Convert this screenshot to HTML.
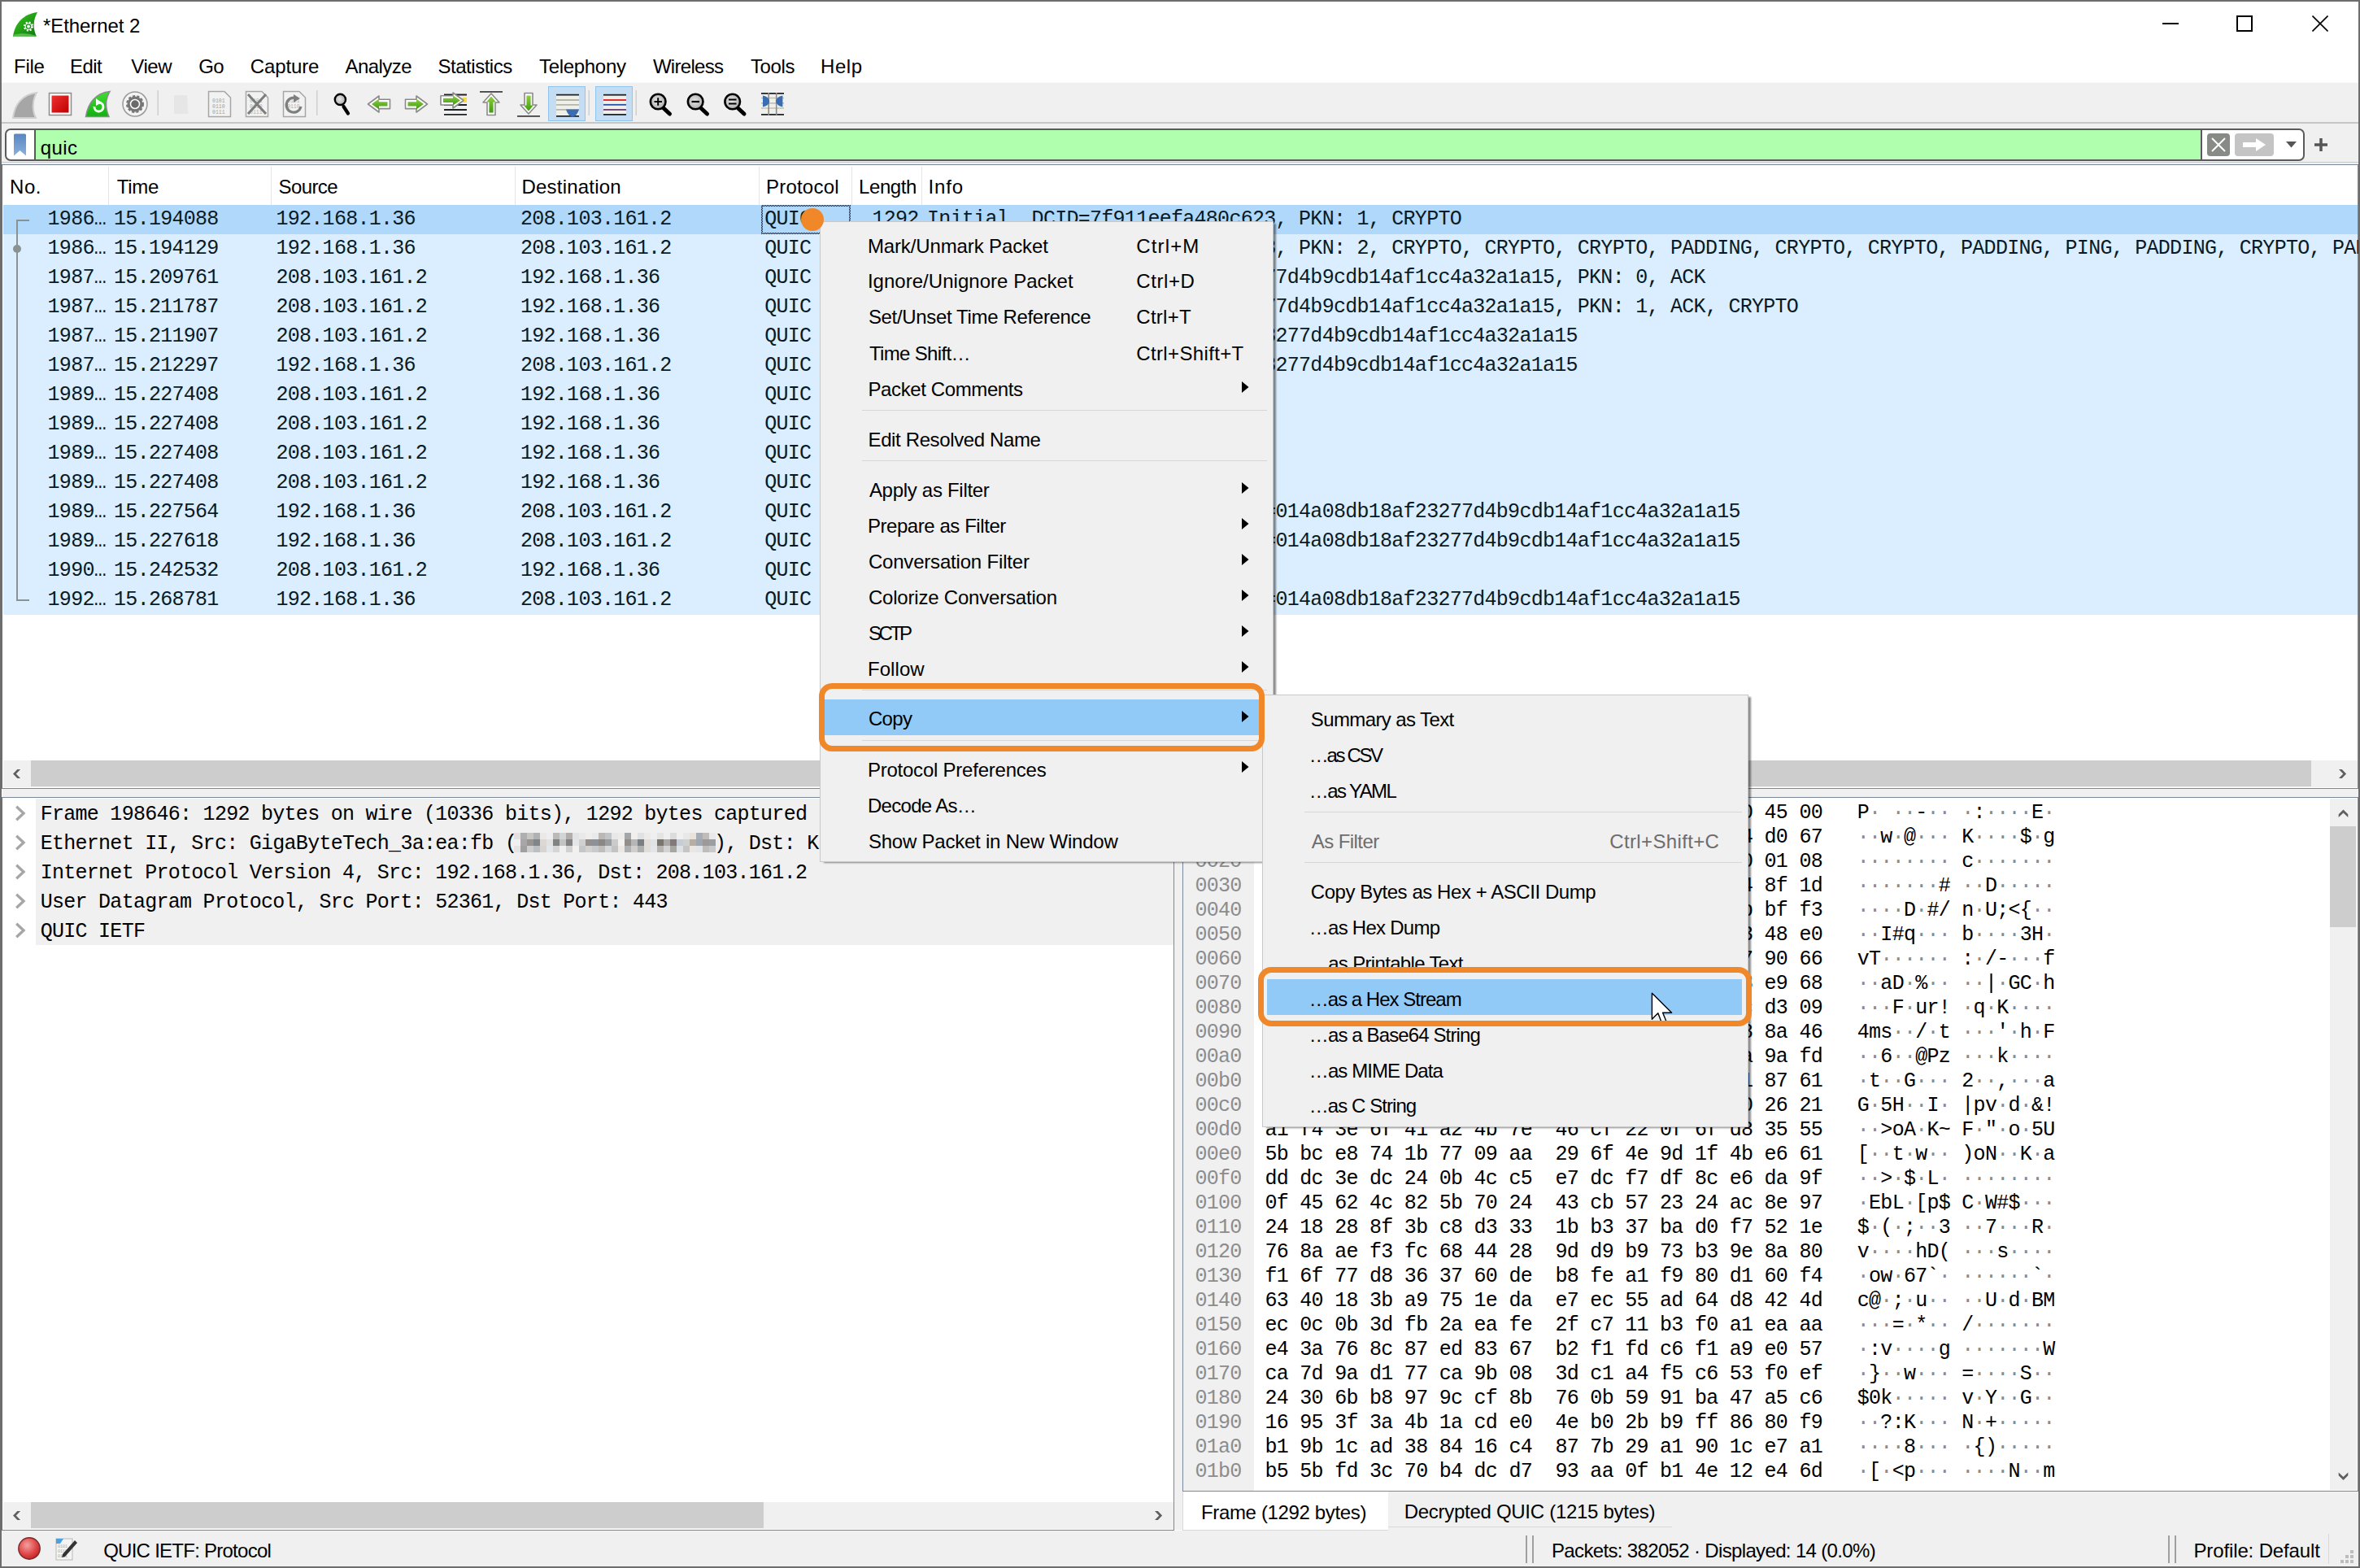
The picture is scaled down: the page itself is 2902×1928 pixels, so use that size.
<!DOCTYPE html><html><head><meta charset="utf-8"><style>
*{margin:0;padding:0;box-sizing:border-box}
html,body{width:2902px;height:1928px;overflow:hidden;background:#fff}
body{position:relative;font-family:"Liberation Sans",sans-serif;font-size:24px;color:#000}
.ab{position:absolute}
.t{position:absolute;white-space:pre;line-height:1}
.m{position:absolute;white-space:pre;font-family:"Liberation Mono",monospace;font-size:25px;letter-spacing:-0.722px;line-height:36px;color:#0a1a24}
.hx{position:absolute;white-space:pre;font-family:"Liberation Mono",monospace;font-size:25px;letter-spacing:-0.722px;line-height:30px;color:#000}
.dt{color:#8a8a8a}
.sb{position:absolute;background:#f0f0f0}
.th{position:absolute;background:#cdcdcd}
</style></head><body>
<div class="ab" style="left:0px;top:0px;width:2902px;height:1928px;border:2px solid #6d6d6d;"></div>
<svg class="ab" style="left:15px;top:14px" width="32" height="32" viewBox="0 0 32 32">
<defs><linearGradient id="fing" x1="0" y1="0" x2="1" y2="1"><stop offset="0" stop-color="#3cc820"/><stop offset="1" stop-color="#0a7a0a"/></linearGradient></defs>
<path d="M1 31 C3 15 14 3 31 1 C26 10 25 20 30 31 Z" fill="url(#fing)"/>
<path d="M2 29 C10 26 22 27 30 30 L30 31 L1 31 Z" fill="#7cc870" opacity="0.7"/>
<circle cx="20" cy="18.5" r="4.3" fill="#fff"/>
<circle cx="20" cy="18.5" r="5" fill="none" stroke="#fff" stroke-width="2.2" stroke-dasharray="2 1.93"/>
<circle cx="20" cy="18.5" r="2.6" fill="none" stroke="#1a8a1a" stroke-width="1.3"/>
</svg>
<div class="t" style="left:53.00px;top:20.08px;font-size:24px;letter-spacing:-0.080px;color:#000;">*Ethernet 2</div>
<div class="ab" style="left:2659px;top:28px;width:20px;height:2px;background:#000"></div>
<div class="ab" style="left:2750px;top:19px;width:20px;height:20px;border:2px solid #000"></div>
<svg class="ab" style="left:2843px;top:19px" width="20" height="20" viewBox="0 0 20 20"><path d="M0.5 0.5 L19.5 19.5 M19.5 0.5 L0.5 19.5" stroke="#000" stroke-width="1.6"/></svg>
<div class="t" style="left:17.10px;top:70.38px;font-size:24px;letter-spacing:-0.333px;color:#000;">File</div>
<div class="t" style="left:86.10px;top:70.38px;font-size:24px;letter-spacing:-0.600px;color:#000;">Edit</div>
<div class="t" style="left:161.30px;top:70.38px;font-size:24px;letter-spacing:-0.467px;color:#000;">View</div>
<div class="t" style="left:244.20px;top:70.38px;font-size:24px;letter-spacing:-0.700px;color:#000;">Go</div>
<div class="t" style="left:307.80px;top:70.38px;font-size:24px;letter-spacing:-0.133px;color:#000;">Capture</div>
<div class="t" style="left:424.60px;top:70.38px;font-size:24px;letter-spacing:-0.567px;color:#000;">Analyze</div>
<div class="t" style="left:538.50px;top:70.38px;font-size:24px;letter-spacing:-0.478px;color:#000;">Statistics</div>
<div class="t" style="left:663.00px;top:70.38px;font-size:24px;letter-spacing:-0.312px;color:#000;">Telephony</div>
<div class="t" style="left:802.90px;top:70.38px;font-size:24px;letter-spacing:-0.686px;color:#000;">Wireless</div>
<div class="t" style="left:922.90px;top:70.38px;font-size:24px;letter-spacing:-0.350px;color:#000;">Tools</div>
<div class="t" style="left:1009.00px;top:70.38px;font-size:24px;letter-spacing:0.567px;color:#000;">Help</div>
<div class="ab" style="left:2px;top:101px;width:2898px;height:51px;background:#f0f0f0;border-top:1px solid #fafafa"></div>
<div class="ab" style="left:2px;top:150px;width:2898px;height:2px;background:#c6c6c6"></div>

<svg class="ab" style="left:0;top:101px" width="1000" height="50" viewBox="0 101 1000 50">
 <defs>
  <linearGradient id="grn" x1="0" y1="0" x2="0" y2="1"><stop offset="0" stop-color="#8fd040"/><stop offset="1" stop-color="#3f9a10"/></linearGradient>
  <radialGradient id="lens" cx="0.45" cy="0.45" r="0.6"><stop offset="0" stop-color="#e8e8e8"/><stop offset="1" stop-color="#a8a8a8"/></radialGradient>
  <linearGradient id="redg" x1="0" y1="0" x2="1" y2="1"><stop offset="0" stop-color="#ee3030"/><stop offset="1" stop-color="#c00000"/></linearGradient>
  <linearGradient id="fin2" x1="0" y1="0" x2="0" y2="1"><stop offset="0" stop-color="#40e030"/><stop offset="1" stop-color="#10b010"/></linearGradient>
 </defs>
 <!-- shark fin gray -->
 <path d="M16 145 C18 128 28 116 45 114 C40 123 39 135 44 145 Z" fill="#a6a6a6" stroke="#d0d0d0" stroke-width="2"/>
 <!-- stop -->
 <rect x="60.5" y="114.5" width="27" height="27" fill="#fff" stroke="#8c8c8c" stroke-width="1.5"/>
 <rect x="63.5" y="117.5" width="21" height="21" fill="url(#redg)"/>
 <!-- restart fin -->
 <path d="M105.5 143.5 C108 127 118 114 135 112.5 C130 121 129 132 134 143.5 Z" fill="url(#fin2)" stroke="#8c8c8c" stroke-width="1.5"/>
 <path d="M116 131 A5.5 5.5 0 1 0 122 126" fill="none" stroke="#fff" stroke-width="3"/>
 <path d="M118 121 L125 126 L118 130 Z" fill="#fff"/>
 <!-- options gear -->
 <circle cx="166" cy="128" r="15" fill="#f4f4f4" stroke="#9a9a9a" stroke-width="1.5"/>
 <circle cx="166" cy="128" r="9.5" fill="#777" stroke="#777" stroke-width="3" stroke-dasharray="3 2.2"/>
 <circle cx="166" cy="128" r="5.5" fill="#6a6a6a" stroke="#fff" stroke-width="1.5"/>
 <rect x="193.5" y="111" width="1.5" height="31" fill="#cfcfcf"/>
 <!-- open (disabled) -->
 <path d="M214 117 L230 117 L231 136 L232 140 L214 140 Z" fill="#e4e4e4" opacity="0.8"/>
 <!-- save file -->
 <g fill="#f2f2f2" stroke="#a6a6a6" stroke-width="1.5"><path d="M256.5 112.5 L276 112.5 L283.5 120 L283.5 143.5 L256.5 143.5 Z"/></g>
 <g font-family="Liberation Mono" font-size="6.5" fill="#a0a0a0"><text x="261" y="126">0101</text><text x="261" y="133">0110</text><text x="261" y="140">0111</text></g>
 <!-- close file -->
 <g fill="#f2f2f2" stroke="#a6a6a6" stroke-width="1.5"><path d="M302.5 112.5 L322 112.5 L329.5 120 L329.5 143.5 L302.5 143.5 Z"/></g>
 <g font-family="Liberation Mono" font-size="6.5" fill="#b0b0b0"><text x="307" y="126">0101</text><text x="307" y="133">0110</text><text x="307" y="140">0111</text></g>
 <path d="M305 116 L327 140 M327 116 L305 140" stroke="#7c7c7c" stroke-width="3"/>
 <!-- reload -->
 <g fill="#f2f2f2" stroke="#a6a6a6" stroke-width="1.5"><path d="M348.5 112.5 L368 112.5 L375.5 120 L375.5 143.5 L348.5 143.5 Z"/></g>
 <g font-family="Liberation Mono" font-size="6.5" fill="#b0b0b0"><text x="353" y="126">0101</text><text x="353" y="133">0110</text></g>
 <path d="M370 131 A9 9 0 1 1 365 121" fill="none" stroke="#7e7e7e" stroke-width="3.2"/>
 <path d="M361 116 L369 121 L361 126 Z" fill="#7e7e7e"/>
 <rect x="389" y="111" width="1.5" height="31" fill="#cfcfcf"/>
 <!-- find -->
 <path d="M422.5 131 L428 139.5" stroke="#000" stroke-width="4.2" stroke-linecap="round"/>
 <circle cx="418.4" cy="122.4" r="6.6" fill="url(#lens)" stroke="#000" stroke-width="2.4"/>
 <!-- back / forward arrows -->
 <g stroke="#8a8a8a" stroke-width="1.6" stroke-linejoin="round" fill="#fff">
  <path d="M452.5 128 L466 118 L466 122.2 L479.5 122.2 L479.5 133.6 L466 133.6 L466 138 Z"/>
  <path d="M525.5 128 L512 118 L512 122.2 L498.5 122.2 L498.5 133.6 L512 133.6 L512 138 Z"/>
 </g>
 <path d="M457 128 L466 121.5 L466 125.3 L476.5 125.3 L476.5 130.6 L466 130.6 L466 134.5 Z" fill="url(#grn)"/>
 <path d="M521 128 L512 121.5 L512 125.3 L501.5 125.3 L501.5 130.6 L512 130.6 L512 134.5 Z" fill="url(#grn)"/>
 <!-- go to packet -->
 <g stroke="#1e2226" stroke-width="1.8"><path d="M546 116.5 H574 M546 129 H574 M546 135 H574 M546 140.8 H574"/></g>
 <rect x="568.5" y="120" width="5.5" height="6" fill="#f5dc40"/>
 <path d="M570 123.5 L557 114 L557 117.8 L542 117.8 L542 129 L557 129 L557 133 Z" fill="#fff" stroke="#8a8a8a" stroke-width="1.6" stroke-linejoin="round"/>
 <path d="M566 123.5 L557 117.3 L557 120.8 L545 120.8 L545 126 L557 126 L557 129.6 Z" fill="url(#grn)"/>
 <!-- first -->
 <path d="M590 112.9 H618" stroke="#444" stroke-width="1.8"/>
 <path d="M604 115 L614 126 L609 126 L609 141.5 L599 141.5 L599 126 L594 126 Z" fill="#fff" stroke="#8a8a8a" stroke-width="1.6" stroke-linejoin="round"/>
 <path d="M604 118.5 L610 125.5 L606.6 125.5 L606.6 138.5 L601.4 138.5 L601.4 125.5 L598 125.5 Z" fill="url(#grn)"/>
 <!-- last -->
 <path d="M636 142.9 H664" stroke="#444" stroke-width="1.8"/>
 <path d="M650 140 L660 129 L655 129 L655 114.5 L645 114.5 L645 129 L640 129 Z" fill="#fff" stroke="#8a8a8a" stroke-width="1.6" stroke-linejoin="round"/>
 <path d="M650 136.5 L656 129.5 L652.6 129.5 L652.6 117.5 L647.4 117.5 L647.4 129.5 L644 129.5 Z" fill="url(#grn)"/>
 <!-- autoscroll (pressed) -->
 <rect x="674.5" y="106.5" width="45" height="42" fill="#c4ddf3" stroke="#90c4f0" stroke-width="1"/>
 <rect x="684" y="116" width="28" height="27" fill="#f0f0ea"/>
 <g stroke="#b4b6a8" stroke-width="1.8"><path d="M684 123 H712 M684 128.8 H712 M684 134.9 H712"/></g>
 <path d="M684 116.7 H712 M684 142.8 H712" stroke="#1e2226" stroke-width="1.8"/>
 <path d="M696 134.5 H712 Q710 142 704 143.5 Q698 142 696 134.5 Z" fill="#3a6db3"/>
 <rect x="723.5" y="111" width="1.5" height="31" fill="#cfcfcf"/>
 <!-- colorize (pressed) -->
 <rect x="732.5" y="106.5" width="45" height="42" fill="#c4ddf3" stroke="#90c4f0" stroke-width="1"/>
 <rect x="742" y="116" width="28" height="26" fill="#f0f0ea"/>
 <path d="M742 116.7 H770" stroke="#1e2226" stroke-width="1.8"/>
 <path d="M742 123 H770" stroke="#e01818" stroke-width="1.8"/>
 <path d="M742 128.8 H770" stroke="#2850a8" stroke-width="1.8"/>
 <path d="M742 134.9 H770" stroke="#6a3a70" stroke-width="1.8"/>
 <path d="M742 140.9 H770" stroke="#1e2226" stroke-width="1.8"/>
 <rect x="781.5" y="111" width="1.5" height="31" fill="#cfcfcf"/>
 <!-- zoom in/out/normal -->
 <g>
  <path d="M816 133 L823.5 140" stroke="#000" stroke-width="5" stroke-linecap="round"/>
  <circle cx="809.2" cy="125" r="9.3" fill="url(#lens)" stroke="#000" stroke-width="2.6"/>
  <path d="M804.5 125 H814 M809.2 120.3 V129.7" stroke="#000" stroke-width="2"/>
  <path d="M862 133 L869.5 140" stroke="#000" stroke-width="5" stroke-linecap="round"/>
  <circle cx="855.2" cy="125" r="9.3" fill="url(#lens)" stroke="#000" stroke-width="2.6"/>
  <path d="M850.5 125 H860" stroke="#000" stroke-width="2.2"/>
  <path d="M907.5 133 L915 140" stroke="#000" stroke-width="5" stroke-linecap="round"/>
  <circle cx="900.7" cy="125" r="9.3" fill="url(#lens)" stroke="#000" stroke-width="2.6"/>
  <path d="M896 122.5 H905.5 M896 127.5 H905.5" stroke="#000" stroke-width="2"/>
 </g>
 <!-- resize columns -->
 <rect x="936" y="115" width="28" height="26" fill="#f0f0ea"/>
 <path d="M936 114.8 H964 M936 140.9 H964" stroke="#1e2226" stroke-width="1.8"/>
 <path d="M936 120.5 H964 M936 126.9 H964 M936 133 H964" stroke="#c0c2b6" stroke-width="1.6"/>
 <path d="M945.2 114 V142 M954.7 114 V142" stroke="#8c8c8c" stroke-width="1.6"/>
 <path d="M938 117.5 C943 118.5 946.2 121.5 946.2 124.5 C946.2 127.5 943 130.5 938 131.5 Z M962.4 117.5 C957.4 118.5 954.2 121.5 954.2 124.5 C954.2 127.5 957.4 130.5 962.4 131.5 Z" fill="#3a6db3"/>
</svg>
<div class="ab" style="left:2px;top:152px;width:2898px;height:50px;background:#f0f0f0"></div>
<div class="ab" style="left:6px;top:158px;width:2828px;height:40px;background:#fff;border:2px solid #5a5a5a;border-radius:7px"></div>
<div class="ab" style="left:42px;top:160px;width:2666px;height:36px;background:#afffaf;border-left:2px solid #5a5a5a;border-right:2px solid #5a5a5a"></div>
<svg class="ab" style="left:16px;top:164px" width="17" height="29" viewBox="0 0 17 29"><defs><linearGradient id="bmk" x1="0" y1="0" x2="0" y2="1"><stop offset="0" stop-color="#5a86c0"/><stop offset="1" stop-color="#8ab0de"/></linearGradient></defs><path d="M1 2 Q1 0.5 2.5 0.5 H14.5 Q16 0.5 16 2 V27.5 L8.5 21 L1 27.5 Z" fill="url(#bmk)"/></svg>
<div class="t" style="left:49.80px;top:169.58px;font-size:24px;letter-spacing:0.400px;color:#000;">quic</div>
<svg class="ab" style="left:2710px;top:160px" width="170" height="36" viewBox="0 0 170 36">
<rect x="4" y="4" width="28" height="28" rx="4" fill="#878a85"/>
<path d="M10 10 L26 26 M26 10 L10 26" stroke="#fff" stroke-width="2"/>
<rect x="38" y="4" width="48" height="28" rx="4" fill="#c4c4c4"/>
<path d="M48 15 H64 V10 L76 18 L64 26 V21 H48 Z" fill="#fff"/>
<path d="M101 14 H114 L107.5 21.5 Z" fill="#555"/>
<path d="M144 10 V26 M136 18 H152" stroke="#555" stroke-width="3.5"/>
</svg>
<div class="ab" style="left:2px;top:199px;width:2898px;height:1px;background:#c8c8c8"></div>
<div class="ab" style="left:2px;top:202px;width:2898px;height:768px;background:#fff;border:1px solid #7a8699;border-left-color:#6d6d6d"></div>
<div class="ab" style="left:133px;top:205px;width:1px;height:47px;background:#e5e5e5"></div>
<div class="ab" style="left:333px;top:205px;width:1px;height:47px;background:#e5e5e5"></div>
<div class="ab" style="left:633px;top:205px;width:1px;height:47px;background:#e5e5e5"></div>
<div class="ab" style="left:933px;top:205px;width:1px;height:47px;background:#e5e5e5"></div>
<div class="ab" style="left:1047px;top:205px;width:1px;height:47px;background:#e5e5e5"></div>
<div class="ab" style="left:1133px;top:205px;width:1px;height:47px;background:#e5e5e5"></div>
<div class="t" style="left:12.00px;top:218.08px;font-size:24px;letter-spacing:0.550px;color:#000;">No.</div>
<div class="t" style="left:143.70px;top:218.08px;font-size:24px;letter-spacing:-0.233px;color:#000;">Time</div>
<div class="t" style="left:342.50px;top:218.08px;font-size:24px;letter-spacing:-0.600px;color:#000;">Source</div>
<div class="t" style="left:641.50px;top:218.08px;font-size:24px;letter-spacing:0.200px;color:#000;">Destination</div>
<div class="t" style="left:942.00px;top:218.08px;font-size:24px;letter-spacing:0.214px;color:#000;">Protocol</div>
<div class="t" style="left:1141.60px;top:218.08px;font-size:24px;letter-spacing:0.833px;color:#000;">Info</div>
<div class="ab" style="left:1047px;top:205px;width:79px;height:45px;overflow:hidden">
<div class="t" style="left:9.00px;top:13.08px;font-size:24px;letter-spacing:-0.400px;color:#000;">Length</div>
</div>
<div class="ab" style="left:4px;top:252px;width:2895px;height:36px;background:#afd8fb"></div>
<div class="m" style="left:58.60px;top:252px">1986…</div>
<div class="m" style="left:140.1px;top:252px">15.194088</div>
<div class="m" style="left:339.5px;top:252px">192.168.1.36</div>
<div class="m" style="left:640px;top:252px">208.103.161.2</div>
<div class="m" style="left:940.2px;top:252px">QUIC</div>
<div class="m" style="left:1072.38px;top:252px">1292</div>
<div class="m" style="left:1140.1px;top:252px;width:1760px;overflow:hidden">Initial, DCID=7f911eefa480c623, PKN: 1, CRYPTO</div>
<div class="ab" style="left:4px;top:288px;width:2895px;height:36px;background:#daeeff"></div>
<div class="m" style="left:58.60px;top:288px">1986…</div>
<div class="m" style="left:140.1px;top:288px">15.194129</div>
<div class="m" style="left:339.5px;top:288px">192.168.1.36</div>
<div class="m" style="left:640px;top:288px">208.103.161.2</div>
<div class="m" style="left:940.2px;top:288px">QUIC</div>
<div class="m" style="left:1072.38px;top:288px">1292</div>
<div class="m" style="left:1140.1px;top:288px;width:1760px;overflow:hidden">Initial, DCID=7f911eefa480c623, PKN: 2, CRYPTO, CRYPTO, CRYPTO, PADDING, CRYPTO, CRYPTO, PADDING, PING, PADDING, CRYPTO, PADDING, CRYPTO</div>
<div class="ab" style="left:4px;top:324px;width:2895px;height:36px;background:#daeeff"></div>
<div class="m" style="left:58.60px;top:324px">1987…</div>
<div class="m" style="left:140.1px;top:324px">15.209761</div>
<div class="m" style="left:339.5px;top:324px">208.103.161.2</div>
<div class="m" style="left:640px;top:324px">192.168.1.36</div>
<div class="m" style="left:940.2px;top:324px">QUIC</div>
<div class="m" style="left:1072.38px;top:324px">1242</div>
<div class="m" style="left:1140.1px;top:324px;width:1760px;overflow:hidden">Initial, SCID=014a08db18af23277d4b9cdb14af1cc4a32a1a15, PKN: 0, ACK</div>
<div class="ab" style="left:4px;top:360px;width:2895px;height:36px;background:#daeeff"></div>
<div class="m" style="left:58.60px;top:360px">1987…</div>
<div class="m" style="left:140.1px;top:360px">15.211787</div>
<div class="m" style="left:339.5px;top:360px">208.103.161.2</div>
<div class="m" style="left:640px;top:360px">192.168.1.36</div>
<div class="m" style="left:940.2px;top:360px">QUIC</div>
<div class="m" style="left:1072.38px;top:360px">1242</div>
<div class="m" style="left:1140.1px;top:360px;width:1760px;overflow:hidden">Initial, SCID=014a08db18af23277d4b9cdb14af1cc4a32a1a15, PKN: 1, ACK, CRYPTO</div>
<div class="ab" style="left:4px;top:396px;width:2895px;height:36px;background:#daeeff"></div>
<div class="m" style="left:58.60px;top:396px">1987…</div>
<div class="m" style="left:140.1px;top:396px">15.211907</div>
<div class="m" style="left:339.5px;top:396px">208.103.161.2</div>
<div class="m" style="left:640px;top:396px">192.168.1.36</div>
<div class="m" style="left:940.2px;top:396px">QUIC</div>
<div class="m" style="left:1072.38px;top:396px">1242</div>
<div class="m" style="left:1140.1px;top:396px;width:1760px;overflow:hidden">Handshake, SCID=014a08db18af23277d4b9cdb14af1cc4a32a1a15</div>
<div class="ab" style="left:4px;top:432px;width:2895px;height:36px;background:#daeeff"></div>
<div class="m" style="left:58.60px;top:432px">1987…</div>
<div class="m" style="left:140.1px;top:432px">15.212297</div>
<div class="m" style="left:339.5px;top:432px">192.168.1.36</div>
<div class="m" style="left:640px;top:432px">208.103.161.2</div>
<div class="m" style="left:940.2px;top:432px">QUIC</div>
<div class="m" style="left:1072.38px;top:432px">1292</div>
<div class="m" style="left:1140.1px;top:432px;width:1760px;overflow:hidden">Handshake, DCID=014a08db18af23277d4b9cdb14af1cc4a32a1a15</div>
<div class="ab" style="left:4px;top:468px;width:2895px;height:36px;background:#daeeff"></div>
<div class="m" style="left:58.60px;top:468px">1989…</div>
<div class="m" style="left:140.1px;top:468px">15.227408</div>
<div class="m" style="left:339.5px;top:468px">208.103.161.2</div>
<div class="m" style="left:640px;top:468px">192.168.1.36</div>
<div class="m" style="left:940.2px;top:468px">QUIC</div>
<div class="m" style="left:1072.38px;top:468px">1242</div>
<div class="m" style="left:1140.1px;top:468px;width:1760px;overflow:hidden">Protected Payload (KP0)</div>
<div class="ab" style="left:4px;top:504px;width:2895px;height:36px;background:#daeeff"></div>
<div class="m" style="left:58.60px;top:504px">1989…</div>
<div class="m" style="left:140.1px;top:504px">15.227408</div>
<div class="m" style="left:339.5px;top:504px">208.103.161.2</div>
<div class="m" style="left:640px;top:504px">192.168.1.36</div>
<div class="m" style="left:940.2px;top:504px">QUIC</div>
<div class="m" style="left:1072.38px;top:504px">1242</div>
<div class="m" style="left:1140.1px;top:504px;width:1760px;overflow:hidden">Protected Payload (KP0)</div>
<div class="ab" style="left:4px;top:540px;width:2895px;height:36px;background:#daeeff"></div>
<div class="m" style="left:58.60px;top:540px">1989…</div>
<div class="m" style="left:140.1px;top:540px">15.227408</div>
<div class="m" style="left:339.5px;top:540px">208.103.161.2</div>
<div class="m" style="left:640px;top:540px">192.168.1.36</div>
<div class="m" style="left:940.2px;top:540px">QUIC</div>
<div class="m" style="left:1072.38px;top:540px">1242</div>
<div class="m" style="left:1140.1px;top:540px;width:1760px;overflow:hidden">Protected Payload (KP0)</div>
<div class="ab" style="left:4px;top:576px;width:2895px;height:36px;background:#daeeff"></div>
<div class="m" style="left:58.60px;top:576px">1989…</div>
<div class="m" style="left:140.1px;top:576px">15.227408</div>
<div class="m" style="left:339.5px;top:576px">208.103.161.2</div>
<div class="m" style="left:640px;top:576px">192.168.1.36</div>
<div class="m" style="left:940.2px;top:576px">QUIC</div>
<div class="m" style="left:1086.66px;top:576px">467</div>
<div class="m" style="left:1140.1px;top:576px;width:1760px;overflow:hidden">Protected Payload (KP0)</div>
<div class="ab" style="left:4px;top:612px;width:2895px;height:36px;background:#daeeff"></div>
<div class="m" style="left:58.60px;top:612px">1989…</div>
<div class="m" style="left:140.1px;top:612px">15.227564</div>
<div class="m" style="left:339.5px;top:612px">192.168.1.36</div>
<div class="m" style="left:640px;top:612px">208.103.161.2</div>
<div class="m" style="left:940.2px;top:612px">QUIC</div>
<div class="m" style="left:1072.38px;top:612px">1292</div>
<div class="m" style="left:1140.1px;top:612px;width:1760px;overflow:hidden">Protected Payload (KP0), DCID=014a08db18af23277d4b9cdb14af1cc4a32a1a15</div>
<div class="ab" style="left:4px;top:648px;width:2895px;height:36px;background:#daeeff"></div>
<div class="m" style="left:58.60px;top:648px">1989…</div>
<div class="m" style="left:140.1px;top:648px">15.227618</div>
<div class="m" style="left:339.5px;top:648px">192.168.1.36</div>
<div class="m" style="left:640px;top:648px">208.103.161.2</div>
<div class="m" style="left:940.2px;top:648px">QUIC</div>
<div class="m" style="left:1072.38px;top:648px">1292</div>
<div class="m" style="left:1140.1px;top:648px;width:1760px;overflow:hidden">Protected Payload (KP0), DCID=014a08db18af23277d4b9cdb14af1cc4a32a1a15</div>
<div class="ab" style="left:4px;top:684px;width:2895px;height:36px;background:#daeeff"></div>
<div class="m" style="left:58.60px;top:684px">1990…</div>
<div class="m" style="left:140.1px;top:684px">15.242532</div>
<div class="m" style="left:339.5px;top:684px">208.103.161.2</div>
<div class="m" style="left:640px;top:684px">192.168.1.36</div>
<div class="m" style="left:940.2px;top:684px">QUIC</div>
<div class="m" style="left:1100.94px;top:684px">62</div>
<div class="m" style="left:1140.1px;top:684px;width:1760px;overflow:hidden">Protected Payload (KP0)</div>
<div class="ab" style="left:4px;top:720px;width:2895px;height:36px;background:#daeeff"></div>
<div class="m" style="left:58.60px;top:720px">1992…</div>
<div class="m" style="left:140.1px;top:720px">15.268781</div>
<div class="m" style="left:339.5px;top:720px">192.168.1.36</div>
<div class="m" style="left:640px;top:720px">208.103.161.2</div>
<div class="m" style="left:940.2px;top:720px">QUIC</div>
<div class="m" style="left:1072.38px;top:720px">1292</div>
<div class="m" style="left:1140.1px;top:720px;width:1760px;overflow:hidden">Protected Payload (KP0), DCID=014a08db18af23277d4b9cdb14af1cc4a32a1a15</div>
<div class="ab" style="left:20px;top:270px;width:2px;height:469px;background:#8a9292"></div>
<div class="ab" style="left:20px;top:270px;width:16px;height:2px;background:#8a9292"></div>
<div class="ab" style="left:20px;top:737px;width:16px;height:2px;background:#8a9292"></div>
<div class="ab" style="left:16px;top:301px;width:10px;height:10px;border-radius:50%;background:#8a9292"></div>
<div class="ab" style="left:936px;top:252px;width:110px;height:2px;background:repeating-conic-gradient(#000 0 25%,transparent 0 50%) 0 0/2px 2px"></div>
<div class="ab" style="left:936px;top:286px;width:110px;height:2px;background:repeating-conic-gradient(#000 0 25%,transparent 0 50%) 0 0/2px 2px"></div>
<div class="ab" style="left:936px;top:252px;width:2px;height:36px;background:repeating-conic-gradient(#000 0 25%,transparent 0 50%) 0 0/2px 2px"></div>
<div class="ab" style="left:1044px;top:252px;width:2px;height:36px;background:repeating-conic-gradient(#000 0 25%,transparent 0 50%) 0 0/2px 2px"></div>
<div class="sb" style="left:4px;top:935px;width:2895px;height:33px"></div>
<div class="th" style="left:38px;top:935px;width:2804px;height:32px"></div>
<svg class="ab" style="left:0;top:0;overflow:visible" width="1" height="1"><path d="M25.10 946.00 L21.30 946.00 L16.00 951.50 L21.30 957.00 L25.10 957.00 L19.80 951.50 Z" fill="#5f5f5f"/></svg>
<svg class="ab" style="left:0;top:0;overflow:visible" width="1" height="1"><path d="M2876.00 946.00 L2879.80 946.00 L2885.10 951.50 L2879.80 957.00 L2876.00 957.00 L2881.30 951.50 Z" fill="#5f5f5f"/></svg>
<div class="ab" style="left:3px;top:970px;width:2897px;height:10px;background:#f0f0f0"></div>
<div class="ab" style="left:2px;top:980px;width:1442px;height:902px;background:#fff;border:1px solid #7a8699;border-left-color:#6d6d6d"></div>
<div class="ab" style="left:44px;top:982px;width:1399px;height:180px;background:#f0f0f0"></div>
<div class="m" style="left:49.7px;top:983.5px;color:#000;width:1393px;overflow:hidden">Frame 198646: 1292 bytes on wire (10336 bits), 1292 bytes captured (10336 bits) on interface</div>
<svg class="ab" style="left:17px;top:990px" width="16" height="22" viewBox="0 0 16 22"><path d="M3.2 1.8 L12 10 L3.2 18.2" fill="none" stroke="#a6a6a6" stroke-width="3.3"/></svg>
<div class="m" style="left:49.7px;top:1019.5px;color:#000;width:1393px;overflow:hidden">Ethernet II, Src: GigaByteTech_3a:ea:fb (                 ), Dst: K</div>
<svg class="ab" style="left:17px;top:1026px" width="16" height="22" viewBox="0 0 16 22"><path d="M3.2 1.8 L12 10 L3.2 18.2" fill="none" stroke="#a6a6a6" stroke-width="3.3"/></svg>
<div class="m" style="left:49.7px;top:1055.5px;color:#000;width:1393px;overflow:hidden">Internet Protocol Version 4, Src: 192.168.1.36, Dst: 208.103.161.2</div>
<svg class="ab" style="left:17px;top:1062px" width="16" height="22" viewBox="0 0 16 22"><path d="M3.2 1.8 L12 10 L3.2 18.2" fill="none" stroke="#a6a6a6" stroke-width="3.3"/></svg>
<div class="m" style="left:49.7px;top:1091.5px;color:#000;width:1393px;overflow:hidden">User Datagram Protocol, Src Port: 52361, Dst Port: 443</div>
<svg class="ab" style="left:17px;top:1098px" width="16" height="22" viewBox="0 0 16 22"><path d="M3.2 1.8 L12 10 L3.2 18.2" fill="none" stroke="#a6a6a6" stroke-width="3.3"/></svg>
<div class="m" style="left:49.7px;top:1127.5px;color:#000;width:1393px;overflow:hidden">QUIC IETF</div>
<svg class="ab" style="left:17px;top:1134px" width="16" height="22" viewBox="0 0 16 22"><path d="M3.2 1.8 L12 10 L3.2 18.2" fill="none" stroke="#a6a6a6" stroke-width="3.3"/></svg>
<svg class="ab" style="left:632px;top:1024px" width="248" height="24" shape-rendering="crispEdges"><rect x="0" y="0" width="8" height="8" fill="#e3e0dd"/><rect x="8" y="0" width="8" height="8" fill="#aeafb1"/><rect x="16" y="0" width="8" height="8" fill="#c8c6c3"/><rect x="24" y="0" width="8" height="8" fill="#b0b1b5"/><rect x="32" y="0" width="8" height="8" fill="#ebe9e7"/><rect x="40" y="0" width="8" height="8" fill="#eeeef0"/><rect x="48" y="0" width="8" height="8" fill="#bcbab8"/><rect x="56" y="0" width="8" height="8" fill="#d2d5d8"/><rect x="64" y="0" width="8" height="8" fill="#b1adaa"/><rect x="72" y="0" width="8" height="8" fill="#e2e3e6"/><rect x="80" y="0" width="8" height="8" fill="#e9e9e9"/><rect x="88" y="0" width="8" height="8" fill="#efeeec"/><rect x="96" y="0" width="8" height="8" fill="#e8e9ea"/><rect x="104" y="0" width="8" height="8" fill="#bab7b4"/><rect x="112" y="0" width="8" height="8" fill="#c2c5c7"/><rect x="120" y="0" width="8" height="8" fill="#e8e8e8"/><rect x="128" y="0" width="8" height="8" fill="#ecebe8"/><rect x="136" y="0" width="8" height="8" fill="#a3a7a9"/><rect x="144" y="0" width="8" height="8" fill="#f0efec"/><rect x="152" y="0" width="8" height="8" fill="#e0e1e3"/><rect x="160" y="0" width="8" height="8" fill="#edebe8"/><rect x="168" y="0" width="8" height="8" fill="#eeeff0"/><rect x="176" y="0" width="8" height="8" fill="#e6e4e2"/><rect x="184" y="0" width="8" height="8" fill="#efeff0"/><rect x="192" y="0" width="8" height="8" fill="#dcdcdc"/><rect x="200" y="0" width="8" height="8" fill="#f0f0f0"/><rect x="208" y="0" width="8" height="8" fill="#e8e8e8"/><rect x="216" y="0" width="8" height="8" fill="#e8e3dd"/><rect x="224" y="0" width="8" height="8" fill="#a8adb5"/><rect x="232" y="0" width="8" height="8" fill="#c0bcba"/><rect x="240" y="0" width="8" height="8" fill="#e9e9ea"/><rect x="0" y="8" width="8" height="8" fill="#f0f0f0"/><rect x="8" y="8" width="8" height="8" fill="#a8a6a6"/><rect x="16" y="8" width="8" height="8" fill="#989492"/><rect x="24" y="8" width="8" height="8" fill="#80858a"/><rect x="32" y="8" width="8" height="8" fill="#dcd8d4"/><rect x="40" y="8" width="8" height="8" fill="#e2e2e3"/><rect x="48" y="8" width="8" height="8" fill="#808381"/><rect x="56" y="8" width="8" height="8" fill="#c3c3c3"/><rect x="64" y="8" width="8" height="8" fill="#858285"/><rect x="72" y="8" width="8" height="8" fill="#e3e6e6"/><rect x="80" y="8" width="8" height="8" fill="#cfd0cf"/><rect x="88" y="8" width="8" height="8" fill="#95908d"/><rect x="96" y="8" width="8" height="8" fill="#8e9298"/><rect x="104" y="8" width="8" height="8" fill="#8b8786"/><rect x="112" y="8" width="8" height="8" fill="#999d9f"/><rect x="120" y="8" width="8" height="8" fill="#cbcbcb"/><rect x="128" y="8" width="8" height="8" fill="#f2f1ef"/><rect x="136" y="8" width="8" height="8" fill="#948e8a"/><rect x="144" y="8" width="8" height="8" fill="#b6b6b6"/><rect x="152" y="8" width="8" height="8" fill="#7a7f83"/><rect x="160" y="8" width="8" height="8" fill="#e2ddd8"/><rect x="168" y="8" width="8" height="8" fill="#e0e3e6"/><rect x="176" y="8" width="8" height="8" fill="#79766f"/><rect x="184" y="8" width="8" height="8" fill="#a9a8a6"/><rect x="192" y="8" width="8" height="8" fill="#84797a"/><rect x="200" y="8" width="8" height="8" fill="#c5ced6"/><rect x="208" y="8" width="8" height="8" fill="#cfd0d0"/><rect x="216" y="8" width="8" height="8" fill="#b8ada5"/><rect x="224" y="8" width="8" height="8" fill="#9ea6b0"/><rect x="232" y="8" width="8" height="8" fill="#9d9999"/><rect x="240" y="8" width="8" height="8" fill="#9c9fa1"/><rect x="0" y="16" width="8" height="8" fill="#e6e4e2"/><rect x="8" y="16" width="8" height="8" fill="#a0a0a0"/><rect x="16" y="16" width="8" height="8" fill="#cfcecc"/><rect x="24" y="16" width="8" height="8" fill="#bcbfc2"/><rect x="32" y="16" width="8" height="8" fill="#d9d4cf"/><rect x="40" y="16" width="8" height="8" fill="#e3e7ea"/><rect x="48" y="16" width="8" height="8" fill="#d4d5d4"/><rect x="56" y="16" width="8" height="8" fill="#f0f0f0"/><rect x="64" y="16" width="8" height="8" fill="#d2d1d1"/><rect x="72" y="16" width="8" height="8" fill="#f2f1ef"/><rect x="80" y="16" width="8" height="8" fill="#c5c6c8"/><rect x="88" y="16" width="8" height="8" fill="#d5d1cf"/><rect x="96" y="16" width="8" height="8" fill="#c9cacd"/><rect x="104" y="16" width="8" height="8" fill="#bfbebc"/><rect x="112" y="16" width="8" height="8" fill="#d5d8da"/><rect x="120" y="16" width="8" height="8" fill="#c3c3c3"/><rect x="128" y="16" width="8" height="8" fill="#ebe7e4"/><rect x="136" y="16" width="8" height="8" fill="#aeb0b2"/><rect x="144" y="16" width="8" height="8" fill="#cfcecb"/><rect x="152" y="16" width="8" height="8" fill="#aeafb1"/><rect x="160" y="16" width="8" height="8" fill="#e1ddd8"/><rect x="168" y="16" width="8" height="8" fill="#e2e6e9"/><rect x="176" y="16" width="8" height="8" fill="#b7b5b0"/><rect x="184" y="16" width="8" height="8" fill="#d4d2d2"/><rect x="192" y="16" width="8" height="8" fill="#a6a6a3"/><rect x="200" y="16" width="8" height="8" fill="#dde2e5"/><rect x="208" y="16" width="8" height="8" fill="#c5c5c5"/><rect x="216" y="16" width="8" height="8" fill="#ebe6e1"/><rect x="224" y="16" width="8" height="8" fill="#e2e5ea"/><rect x="232" y="16" width="8" height="8" fill="#bfbcb9"/><rect x="240" y="16" width="8" height="8" fill="#c8c9cb"/></svg>
<div class="sb" style="left:4px;top:1847px;width:1439px;height:33px"></div>
<div class="th" style="left:38px;top:1847px;width:901px;height:32px"></div>
<svg class="ab" style="left:0;top:0;overflow:visible" width="1" height="1"><path d="M25.10 1858.00 L21.30 1858.00 L16.00 1863.50 L21.30 1869.00 L25.10 1869.00 L19.80 1863.50 Z" fill="#5f5f5f"/></svg>
<svg class="ab" style="left:0;top:0;overflow:visible" width="1" height="1"><path d="M1420.00 1858.00 L1423.80 1858.00 L1429.10 1863.50 L1423.80 1869.00 L1420.00 1869.00 L1425.30 1863.50 Z" fill="#5f5f5f"/></svg>
<div class="ab" style="left:1444px;top:980px;width:10px;height:901px;background:#f0f0f0"></div>
<div class="ab" style="left:1454px;top:980px;width:1446px;height:854px;background:#fff;border:1px solid #7a8699"></div>
<div class="ab" style="left:1455px;top:981px;width:87px;height:852px;background:#f0f0f0"></div>
<div class="hx" style="left:1469.5px;top:985px;color:#8c8c8c">0000</div>
<div class="hx" style="left:1555.5px;top:985px">50 9d 20 08 a3 2d f7 00  01 3a d0 01 08 00 45 00</div>
<div class="hx" style="left:2283.8px;top:985px">P<span class="dt">·</span> <span class="dt">·</span><span class="dt">·</span>-<span class="dt">·</span><span class="dt">·</span> <span class="dt">·</span>:<span class="dt">·</span><span class="dt">·</span><span class="dt">·</span><span class="dt">·</span>E<span class="dt">·</span></div>
<div class="hx" style="left:1469.5px;top:1015px;color:#8c8c8c">0010</div>
<div class="hx" style="left:1555.5px;top:1015px">d0 1b 77 00 40 01 a3 a3  4b 01 1b 01 d0 24 d0 67</div>
<div class="hx" style="left:2283.8px;top:1015px"><span class="dt">·</span><span class="dt">·</span>w<span class="dt">·</span>@<span class="dt">·</span><span class="dt">·</span><span class="dt">·</span> K<span class="dt">·</span><span class="dt">·</span><span class="dt">·</span><span class="dt">·</span>$<span class="dt">·</span>g</div>
<div class="hx" style="left:1469.5px;top:1045px;color:#8c8c8c">0020</div>
<div class="hx" style="left:1555.5px;top:1045px">00 e6 01 1b f7 f7 e6 00  63 e6 e6 a3 00 00 01 08</div>
<div class="hx" style="left:2283.8px;top:1045px"><span class="dt">·</span><span class="dt">·</span><span class="dt">·</span><span class="dt">·</span><span class="dt">·</span><span class="dt">·</span><span class="dt">·</span><span class="dt">·</span> c<span class="dt">·</span><span class="dt">·</span><span class="dt">·</span><span class="dt">·</span><span class="dt">·</span><span class="dt">·</span><span class="dt">·</span></div>
<div class="hx" style="left:1469.5px;top:1075px;color:#8c8c8c">0030</div>
<div class="hx" style="left:1555.5px;top:1075px">08 80 a3 08 d0 01 e6 23  80 d0 44 f7 08 84 8f 1d</div>
<div class="hx" style="left:2283.8px;top:1075px"><span class="dt">·</span><span class="dt">·</span><span class="dt">·</span><span class="dt">·</span><span class="dt">·</span><span class="dt">·</span><span class="dt">·</span># <span class="dt">·</span><span class="dt">·</span>D<span class="dt">·</span><span class="dt">·</span><span class="dt">·</span><span class="dt">·</span><span class="dt">·</span></div>
<div class="hx" style="left:1469.5px;top:1105px;color:#8c8c8c">0040</div>
<div class="hx" style="left:1555.5px;top:1105px">f7 1b 9d 01 44 d0 23 2f  6e 8f 55 3b 3c 7b bf f3</div>
<div class="hx" style="left:2283.8px;top:1105px"><span class="dt">·</span><span class="dt">·</span><span class="dt">·</span><span class="dt">·</span>D<span class="dt">·</span>#/ n<span class="dt">·</span>U;&lt;{<span class="dt">·</span><span class="dt">·</span></div>
<div class="hx" style="left:1469.5px;top:1135px;color:#8c8c8c">0050</div>
<div class="hx" style="left:1555.5px;top:1135px">00 e6 49 23 71 1b c5 f7  62 d0 a3 9d c5 33 48 e0</div>
<div class="hx" style="left:2283.8px;top:1135px"><span class="dt">·</span><span class="dt">·</span>I#q<span class="dt">·</span><span class="dt">·</span><span class="dt">·</span> b<span class="dt">·</span><span class="dt">·</span><span class="dt">·</span><span class="dt">·</span>3H<span class="dt">·</span></div>
<div class="hx" style="left:1469.5px;top:1165px;color:#8c8c8c">0060</div>
<div class="hx" style="left:1555.5px;top:1165px">76 54 c5 9d 80 1b 08 8f  3a 1b 2f 2d 01 97 90 66</div>
<div class="hx" style="left:2283.8px;top:1165px">vT<span class="dt">·</span><span class="dt">·</span><span class="dt">·</span><span class="dt">·</span><span class="dt">·</span><span class="dt">·</span> :<span class="dt">·</span>/-<span class="dt">·</span><span class="dt">·</span><span class="dt">·</span>f</div>
<div class="hx" style="left:1469.5px;top:1195px;color:#8c8c8c">0070</div>
<div class="hx" style="left:1555.5px;top:1195px">d0 c5 61 44 9d 25 8f c5  80 e6 7c 01 47 43 e9 68</div>
<div class="hx" style="left:2283.8px;top:1195px"><span class="dt">·</span><span class="dt">·</span>aD<span class="dt">·</span>%<span class="dt">·</span><span class="dt">·</span> <span class="dt">·</span><span class="dt">·</span>|<span class="dt">·</span>GC<span class="dt">·</span>h</div>
<div class="hx" style="left:1469.5px;top:1225px;color:#8c8c8c">0080</div>
<div class="hx" style="left:1555.5px;top:1225px">d0 a3 08 46 9d 75 72 21  08 71 c5 4b a3 9c d3 09</div>
<div class="hx" style="left:2283.8px;top:1225px"><span class="dt">·</span><span class="dt">·</span><span class="dt">·</span>F<span class="dt">·</span>ur! <span class="dt">·</span>q<span class="dt">·</span>K<span class="dt">·</span><span class="dt">·</span><span class="dt">·</span><span class="dt">·</span></div>
<div class="hx" style="left:1469.5px;top:1255px;color:#8c8c8c">0090</div>
<div class="hx" style="left:1555.5px;top:1255px">34 6d 73 d0 e6 2f 9d 74  9d 8f 9d 27 e6 68 8a 46</div>
<div class="hx" style="left:2283.8px;top:1255px">4ms<span class="dt">·</span><span class="dt">·</span>/<span class="dt">·</span>t <span class="dt">·</span><span class="dt">·</span><span class="dt">·</span>&#x27;<span class="dt">·</span>h<span class="dt">·</span>F</div>
<div class="hx" style="left:1469.5px;top:1285px;color:#8c8c8c">00a0</div>
<div class="hx" style="left:1555.5px;top:1285px">e6 c5 36 01 01 40 50 7a  80 c5 8f 6b f7 8a 9a fd</div>
<div class="hx" style="left:2283.8px;top:1285px"><span class="dt">·</span><span class="dt">·</span>6<span class="dt">·</span><span class="dt">·</span>@Pz <span class="dt">·</span><span class="dt">·</span><span class="dt">·</span>k<span class="dt">·</span><span class="dt">·</span><span class="dt">·</span><span class="dt">·</span></div>
<div class="hx" style="left:1469.5px;top:1315px;color:#8c8c8c">00b0</div>
<div class="hx" style="left:1555.5px;top:1315px">8f 74 80 f7 47 e6 f7 c5  32 80 8f 2c a3 91 87 61</div>
<div class="hx" style="left:2283.8px;top:1315px"><span class="dt">·</span>t<span class="dt">·</span><span class="dt">·</span>G<span class="dt">·</span><span class="dt">·</span><span class="dt">·</span> 2<span class="dt">·</span><span class="dt">·</span>,<span class="dt">·</span><span class="dt">·</span><span class="dt">·</span>a</div>
<div class="hx" style="left:1469.5px;top:1345px;color:#8c8c8c">00c0</div>
<div class="hx" style="left:1555.5px;top:1345px">47 00 35 48 c5 9d 49 08  7c 70 76 e6 64 90 26 21</div>
<div class="hx" style="left:2283.8px;top:1345px">G<span class="dt">·</span>5H<span class="dt">·</span><span class="dt">·</span>I<span class="dt">·</span> |pv<span class="dt">·</span>d<span class="dt">·</span>&amp;!</div>
<div class="hx" style="left:1469.5px;top:1375px;color:#8c8c8c">00d0</div>
<div class="hx" style="left:1555.5px;top:1375px">a1 f4 3e 6f 41 a2 4b 7e  46 cf 22 0f 6f d8 35 55</div>
<div class="hx" style="left:2283.8px;top:1375px"><span class="dt">·</span><span class="dt">·</span>&gt;oA<span class="dt">·</span>K~ F<span class="dt">·</span>&quot;<span class="dt">·</span>o<span class="dt">·</span>5U</div>
<div class="hx" style="left:1469.5px;top:1405px;color:#8c8c8c">00e0</div>
<div class="hx" style="left:1555.5px;top:1405px">5b bc e8 74 1b 77 09 aa  29 6f 4e 9d 1f 4b e6 61</div>
<div class="hx" style="left:2283.8px;top:1405px">[<span class="dt">·</span><span class="dt">·</span>t<span class="dt">·</span>w<span class="dt">·</span><span class="dt">·</span> )oN<span class="dt">·</span><span class="dt">·</span>K<span class="dt">·</span>a</div>
<div class="hx" style="left:1469.5px;top:1435px;color:#8c8c8c">00f0</div>
<div class="hx" style="left:1555.5px;top:1435px">dd dc 3e dc 24 0b 4c c5  e7 dc f7 df 8c e6 da 9f</div>
<div class="hx" style="left:2283.8px;top:1435px"><span class="dt">·</span><span class="dt">·</span>&gt;<span class="dt">·</span>$<span class="dt">·</span>L<span class="dt">·</span> <span class="dt">·</span><span class="dt">·</span><span class="dt">·</span><span class="dt">·</span><span class="dt">·</span><span class="dt">·</span><span class="dt">·</span><span class="dt">·</span></div>
<div class="hx" style="left:1469.5px;top:1465px;color:#8c8c8c">0100</div>
<div class="hx" style="left:1555.5px;top:1465px">0f 45 62 4c 82 5b 70 24  43 cb 57 23 24 ac 8e 97</div>
<div class="hx" style="left:2283.8px;top:1465px"><span class="dt">·</span>EbL<span class="dt">·</span>[p$ C<span class="dt">·</span>W#$<span class="dt">·</span><span class="dt">·</span><span class="dt">·</span></div>
<div class="hx" style="left:1469.5px;top:1495px;color:#8c8c8c">0110</div>
<div class="hx" style="left:1555.5px;top:1495px">24 18 28 8f 3b c8 d3 33  1b b3 37 ba d0 f7 52 1e</div>
<div class="hx" style="left:2283.8px;top:1495px">$<span class="dt">·</span>(<span class="dt">·</span>;<span class="dt">·</span><span class="dt">·</span>3 <span class="dt">·</span><span class="dt">·</span>7<span class="dt">·</span><span class="dt">·</span><span class="dt">·</span>R<span class="dt">·</span></div>
<div class="hx" style="left:1469.5px;top:1525px;color:#8c8c8c">0120</div>
<div class="hx" style="left:1555.5px;top:1525px">76 8a ae f3 fc 68 44 28  9d d9 b9 73 b3 9e 8a 80</div>
<div class="hx" style="left:2283.8px;top:1525px">v<span class="dt">·</span><span class="dt">·</span><span class="dt">·</span><span class="dt">·</span>hD( <span class="dt">·</span><span class="dt">·</span><span class="dt">·</span>s<span class="dt">·</span><span class="dt">·</span><span class="dt">·</span><span class="dt">·</span></div>
<div class="hx" style="left:1469.5px;top:1555px;color:#8c8c8c">0130</div>
<div class="hx" style="left:1555.5px;top:1555px">f1 6f 77 d8 36 37 60 de  b8 fe a1 f9 80 d1 60 f4</div>
<div class="hx" style="left:2283.8px;top:1555px"><span class="dt">·</span>ow<span class="dt">·</span>67`<span class="dt">·</span> <span class="dt">·</span><span class="dt">·</span><span class="dt">·</span><span class="dt">·</span><span class="dt">·</span><span class="dt">·</span>`<span class="dt">·</span></div>
<div class="hx" style="left:1469.5px;top:1585px;color:#8c8c8c">0140</div>
<div class="hx" style="left:1555.5px;top:1585px">63 40 18 3b a9 75 1e da  e7 ec 55 ad 64 d8 42 4d</div>
<div class="hx" style="left:2283.8px;top:1585px">c@<span class="dt">·</span>;<span class="dt">·</span>u<span class="dt">·</span><span class="dt">·</span> <span class="dt">·</span><span class="dt">·</span>U<span class="dt">·</span>d<span class="dt">·</span>BM</div>
<div class="hx" style="left:1469.5px;top:1615px;color:#8c8c8c">0150</div>
<div class="hx" style="left:1555.5px;top:1615px">ec 0c 0b 3d fb 2a ea fe  2f c7 11 b3 f0 a1 ea aa</div>
<div class="hx" style="left:2283.8px;top:1615px"><span class="dt">·</span><span class="dt">·</span><span class="dt">·</span>=<span class="dt">·</span>*<span class="dt">·</span><span class="dt">·</span> /<span class="dt">·</span><span class="dt">·</span><span class="dt">·</span><span class="dt">·</span><span class="dt">·</span><span class="dt">·</span><span class="dt">·</span></div>
<div class="hx" style="left:1469.5px;top:1645px;color:#8c8c8c">0160</div>
<div class="hx" style="left:1555.5px;top:1645px">e4 3a 76 8c 87 ed 83 67  b2 f1 fd c6 f1 a9 e0 57</div>
<div class="hx" style="left:2283.8px;top:1645px"><span class="dt">·</span>:v<span class="dt">·</span><span class="dt">·</span><span class="dt">·</span><span class="dt">·</span>g <span class="dt">·</span><span class="dt">·</span><span class="dt">·</span><span class="dt">·</span><span class="dt">·</span><span class="dt">·</span><span class="dt">·</span>W</div>
<div class="hx" style="left:1469.5px;top:1675px;color:#8c8c8c">0170</div>
<div class="hx" style="left:1555.5px;top:1675px">ca 7d 9a d1 77 ca 9b 08  3d c1 a4 f5 c6 53 f0 ef</div>
<div class="hx" style="left:2283.8px;top:1675px"><span class="dt">·</span>}<span class="dt">·</span><span class="dt">·</span>w<span class="dt">·</span><span class="dt">·</span><span class="dt">·</span> =<span class="dt">·</span><span class="dt">·</span><span class="dt">·</span><span class="dt">·</span>S<span class="dt">·</span><span class="dt">·</span></div>
<div class="hx" style="left:1469.5px;top:1705px;color:#8c8c8c">0180</div>
<div class="hx" style="left:1555.5px;top:1705px">24 30 6b b8 97 9c cf 8b  76 0b 59 91 ba 47 a5 c6</div>
<div class="hx" style="left:2283.8px;top:1705px">$0k<span class="dt">·</span><span class="dt">·</span><span class="dt">·</span><span class="dt">·</span><span class="dt">·</span> v<span class="dt">·</span>Y<span class="dt">·</span><span class="dt">·</span>G<span class="dt">·</span><span class="dt">·</span></div>
<div class="hx" style="left:1469.5px;top:1735px;color:#8c8c8c">0190</div>
<div class="hx" style="left:1555.5px;top:1735px">16 95 3f 3a 4b 1a cd e0  4e b0 2b b9 ff 86 80 f9</div>
<div class="hx" style="left:2283.8px;top:1735px"><span class="dt">·</span><span class="dt">·</span>?:K<span class="dt">·</span><span class="dt">·</span><span class="dt">·</span> N<span class="dt">·</span>+<span class="dt">·</span><span class="dt">·</span><span class="dt">·</span><span class="dt">·</span><span class="dt">·</span></div>
<div class="hx" style="left:1469.5px;top:1765px;color:#8c8c8c">01a0</div>
<div class="hx" style="left:1555.5px;top:1765px">b1 9b 1c ad 38 84 16 c4  87 7b 29 a1 90 1c e7 a1</div>
<div class="hx" style="left:2283.8px;top:1765px"><span class="dt">·</span><span class="dt">·</span><span class="dt">·</span><span class="dt">·</span>8<span class="dt">·</span><span class="dt">·</span><span class="dt">·</span> <span class="dt">·</span>{)<span class="dt">·</span><span class="dt">·</span><span class="dt">·</span><span class="dt">·</span><span class="dt">·</span></div>
<div class="hx" style="left:1469.5px;top:1795px;color:#8c8c8c">01b0</div>
<div class="hx" style="left:1555.5px;top:1795px">b5 5b fd 3c 70 b4 dc d7  93 aa 0f b1 4e 12 e4 6d</div>
<div class="hx" style="left:2283.8px;top:1795px"><span class="dt">·</span>[<span class="dt">·</span>&lt;p<span class="dt">·</span><span class="dt">·</span><span class="dt">·</span> <span class="dt">·</span><span class="dt">·</span><span class="dt">·</span><span class="dt">·</span>N<span class="dt">·</span><span class="dt">·</span>m</div>
<div class="sb" style="left:2865px;top:982px;width:33px;height:850px"></div>
<div class="th" style="left:2865px;top:1016px;width:32px;height:124px"></div>
<svg class="ab" style="left:0;top:0;overflow:visible" width="1" height="1"><path d="M2875.70 1005.00 L2875.70 1001.20 L2881.50 995.50 L2887.30 1001.20 L2887.30 1005.00 L2881.50 999.40 Z" fill="#5f5f5f"/></svg>
<svg class="ab" style="left:0;top:0;overflow:visible" width="1" height="1"><path d="M2875.70 1810.50 L2875.70 1814.30 L2881.50 1820.00 L2887.30 1814.30 L2887.30 1810.50 L2881.50 1816.10 Z" fill="#5f5f5f"/></svg>
<div class="ab" style="left:1454px;top:1834px;width:1446px;height:48px;background:#f0f0f0"></div>
<div class="ab" style="left:1454px;top:1834px;width:253px;height:48px;background:#fff;border-left:1px solid #d9d9d9;border-bottom:1px solid #d9d9d9"></div>
<div class="ab" style="left:1707px;top:1877px;width:349px;height:1px;background:#d9d9d9"></div>
<div class="t" style="left:1477.00px;top:1848.28px;font-size:24px;letter-spacing:-0.353px;color:#000;">Frame (1292 bytes)</div>
<div class="t" style="left:1726.70px;top:1846.68px;font-size:24px;letter-spacing:-0.281px;color:#000;">Decrypted QUIC (1215 bytes)</div>
<div class="ab" style="left:2px;top:1882px;width:2898px;height:44px;background:#f0f0f0"></div>
<svg class="ab" style="left:21px;top:1889px" width="30" height="30" viewBox="0 0 30 30"><defs><radialGradient id="rec" cx="0.4" cy="0.35" r="0.7"><stop offset="0" stop-color="#f4a0a0"/><stop offset="0.6" stop-color="#e04848"/><stop offset="1" stop-color="#c02020"/></radialGradient></defs><circle cx="15" cy="15" r="13.2" fill="url(#rec)" stroke="#7a2a2a" stroke-width="1.4"/></svg>
<svg class="ab" style="left:68px;top:1889px" width="30" height="30" viewBox="0 0 30 30"><rect x="1" y="3" width="20" height="26" fill="#f4f4f4" stroke="#b8b8b8"/><path d="M1 3 H10 L6 9 H1Z" fill="#4aa0e0"/><g font-family="Liberation Mono" font-size="5" fill="#aaa"><text x="3" y="14">0101</text><text x="3" y="20">0110</text><text x="3" y="26">0111</text></g><path d="M9 22 L24 5 L27 8 L12 25 L8 26 Z" fill="#333"/></svg>
<div class="t" style="left:127.20px;top:1895.08px;font-size:24px;letter-spacing:-0.744px;color:#000;">QUIC IETF: Protocol</div>
<div class="ab" style="left:1876px;top:1888px;width:2px;height:34px;background:#a0a0a0"></div>
<div class="ab" style="left:1884px;top:1888px;width:2px;height:34px;background:#a0a0a0"></div>
<div class="t" style="left:1908.00px;top:1895.08px;font-size:24px;letter-spacing:-0.654px;color:#000;">Packets: 382052 · Displayed: 14 (0.0%)</div>
<div class="ab" style="left:2666px;top:1888px;width:2px;height:34px;background:#a0a0a0"></div>
<div class="ab" style="left:2674px;top:1888px;width:2px;height:34px;background:#a0a0a0"></div>
<div class="t" style="left:2697.50px;top:1895.08px;font-size:24px;letter-spacing:-0.133px;color:#000;">Profile: Default</div>
<div class="ab" style="left:2863px;top:1886px;width:1px;height:37px;background:#d8d8d8"></div>
<div class="ab" style="left:2890px;top:1906px;width:4px;height:4px;background:#bdbdbd"></div>
<div class="ab" style="left:2884px;top:1912px;width:4px;height:4px;background:#bdbdbd"></div>
<div class="ab" style="left:2890px;top:1912px;width:4px;height:4px;background:#bdbdbd"></div>
<div class="ab" style="left:2878px;top:1918px;width:4px;height:4px;background:#bdbdbd"></div>
<div class="ab" style="left:2884px;top:1918px;width:4px;height:4px;background:#bdbdbd"></div>
<div class="ab" style="left:2890px;top:1918px;width:4px;height:4px;background:#bdbdbd"></div>
<div class="ab" style="left:1008px;top:272px;width:558px;height:788px;background:#f0f0f0;border:1px solid #c8c8c8;box-shadow:4px 2px 2px -1px rgba(0,0,0,0.45)"></div>
<div class="ab" style="left:1060px;top:504px;width:498px;height:1px;background:#d7d7d7"></div>
<div class="ab" style="left:1060px;top:566px;width:498px;height:1px;background:#d7d7d7"></div>
<div class="ab" style="left:1060px;top:848px;width:498px;height:1px;background:#d7d7d7"></div>
<div class="ab" style="left:1060px;top:910px;width:498px;height:1px;background:#d7d7d7"></div>
<div class="ab" style="left:1014px;top:860px;width:544px;height:44px;background:#91c9f7"></div>
<div class="t" style="left:1066.90px;top:290.98px;font-size:24px;letter-spacing:-0.124px;color:#000;">Mark/Unmark Packet</div>
<div class="t" style="left:1397.30px;top:290.98px;font-size:24px;letter-spacing:1.140px;color:#000;">Ctrl+M</div>
<div class="t" style="left:1066.90px;top:334.38px;font-size:24px;letter-spacing:0.029px;color:#000;">Ignore/Unignore Packet</div>
<div class="t" style="left:1397.30px;top:334.38px;font-size:24px;letter-spacing:0.580px;color:#000;">Ctrl+D</div>
<div class="t" style="left:1067.90px;top:378.48px;font-size:24px;letter-spacing:-0.339px;color:#000;">Set/Unset Time Reference</div>
<div class="t" style="left:1397.30px;top:378.48px;font-size:24px;letter-spacing:0.260px;color:#000;">Ctrl+T</div>
<div class="t" style="left:1068.90px;top:422.68px;font-size:24px;letter-spacing:-0.660px;color:#000;">Time Shift…</div>
<div class="t" style="left:1397.30px;top:422.68px;font-size:24px;letter-spacing:0.355px;color:#000;">Ctrl+Shift+T</div>
<div class="t" style="left:1067.50px;top:466.78px;font-size:24px;letter-spacing:-0.393px;color:#000;">Packet Comments</div>
<svg class="ab" style="left:1527px;top:468.5px" width="9" height="14" viewBox="0 0 9 14"><path d="M0 0 L8.5 7 L0 14 Z" fill="#000"/></svg>
<div class="t" style="left:1067.50px;top:528.68px;font-size:24px;letter-spacing:-0.371px;color:#000;">Edit Resolved Name</div>
<div class="t" style="left:1068.90px;top:590.98px;font-size:24px;letter-spacing:-0.293px;color:#000;">Apply as Filter</div>
<svg class="ab" style="left:1527px;top:592.7px" width="9" height="14" viewBox="0 0 9 14"><path d="M0 0 L8.5 7 L0 14 Z" fill="#000"/></svg>
<div class="t" style="left:1066.90px;top:634.98px;font-size:24px;letter-spacing:-0.438px;color:#000;">Prepare as Filter</div>
<svg class="ab" style="left:1527px;top:636.7px" width="9" height="14" viewBox="0 0 9 14"><path d="M0 0 L8.5 7 L0 14 Z" fill="#000"/></svg>
<div class="t" style="left:1067.90px;top:678.88px;font-size:24px;letter-spacing:-0.189px;color:#000;">Conversation Filter</div>
<svg class="ab" style="left:1527px;top:680.6px" width="9" height="14" viewBox="0 0 9 14"><path d="M0 0 L8.5 7 L0 14 Z" fill="#000"/></svg>
<div class="t" style="left:1067.90px;top:723.28px;font-size:24px;letter-spacing:-0.195px;color:#000;">Colorize Conversation</div>
<svg class="ab" style="left:1527px;top:725.0px" width="9" height="14" viewBox="0 0 9 14"><path d="M0 0 L8.5 7 L0 14 Z" fill="#000"/></svg>
<div class="t" style="left:1067.90px;top:766.78px;font-size:24px;letter-spacing:-3.300px;color:#000;">SCTP</div>
<svg class="ab" style="left:1527px;top:768.5px" width="9" height="14" viewBox="0 0 9 14"><path d="M0 0 L8.5 7 L0 14 Z" fill="#000"/></svg>
<div class="t" style="left:1066.90px;top:810.88px;font-size:24px;letter-spacing:0.080px;color:#000;">Follow</div>
<svg class="ab" style="left:1527px;top:812.6px" width="9" height="14" viewBox="0 0 9 14"><path d="M0 0 L8.5 7 L0 14 Z" fill="#000"/></svg>
<div class="t" style="left:1067.90px;top:872.08px;font-size:24px;letter-spacing:-0.667px;color:#000;">Copy</div>
<svg class="ab" style="left:1527px;top:873.8px" width="9" height="14" viewBox="0 0 9 14"><path d="M0 0 L8.5 7 L0 14 Z" fill="#000"/></svg>
<div class="t" style="left:1066.90px;top:934.58px;font-size:24px;letter-spacing:-0.226px;color:#000;">Protocol Preferences</div>
<svg class="ab" style="left:1527px;top:936.3px" width="9" height="14" viewBox="0 0 9 14"><path d="M0 0 L8.5 7 L0 14 Z" fill="#000"/></svg>
<div class="t" style="left:1066.90px;top:979.08px;font-size:24px;letter-spacing:-0.689px;color:#000;">Decode As…</div>
<div class="t" style="left:1067.90px;top:1022.58px;font-size:24px;letter-spacing:-0.221px;color:#000;">Show Packet in New Window</div>
<div class="ab" style="left:1552px;top:854px;width:598px;height:532px;background:#f0f0f0;border:1px solid #c8c8c8;box-shadow:4px 2px 2px -1px rgba(0,0,0,0.45)"></div>
<div class="ab" style="left:1604px;top:998px;width:538px;height:1px;background:#d7d7d7"></div>
<div class="ab" style="left:1604px;top:1060px;width:538px;height:1px;background:#d7d7d7"></div>
<div class="ab" style="left:1558px;top:1204px;width:584px;height:44px;background:#91c9f7"></div>
<div class="t" style="left:1611.80px;top:872.78px;font-size:24px;letter-spacing:-0.607px;color:#000;">Summary as Text</div>
<div class="t" style="left:1609.80px;top:916.98px;font-size:24px;letter-spacing:-2.350px;color:#000;">…as CSV</div>
<div class="t" style="left:1609.80px;top:961.28px;font-size:24px;letter-spacing:-1.586px;color:#000;">…as YAML</div>
<div class="t" style="left:1612.80px;top:1022.58px;font-size:24px;letter-spacing:-0.575px;color:#6d6d6d;">As Filter</div>
<div class="t" style="left:1611.80px;top:1084.78px;font-size:24px;letter-spacing:-0.434px;color:#000;">Copy Bytes as Hex + ASCII Dump</div>
<div class="t" style="left:1609.80px;top:1129.28px;font-size:24px;letter-spacing:-0.736px;color:#000;">…as Hex Dump</div>
<div class="t" style="left:1609.80px;top:1172.98px;font-size:24px;letter-spacing:-0.664px;color:#000;">…as Printable Text</div>
<div class="t" style="left:1609.80px;top:1216.68px;font-size:24px;letter-spacing:-0.993px;color:#000;">…as a Hex Stream</div>
<div class="t" style="left:1609.80px;top:1260.88px;font-size:24px;letter-spacing:-0.878px;color:#000;">…as a Base64 String</div>
<div class="t" style="left:1609.80px;top:1305.18px;font-size:24px;letter-spacing:-0.917px;color:#000;">…as MIME Data</div>
<div class="t" style="left:1609.80px;top:1348.28px;font-size:24px;letter-spacing:-0.936px;color:#000;">…as C String</div>
<div class="t" style="left:1979.30px;top:1022.58px;font-size:24px;letter-spacing:0.355px;color:#6d6d6d;">Ctrl+Shift+C</div>
<div class="ab" style="left:1007px;top:840px;width:548px;height:84px;border:7px solid #f0882a;border-radius:16px"></div>
<svg class="ab" style="left:2030px;top:1220px" width="30" height="42" viewBox="0 0 30 42"><path d="M1.4 1.2 L1.4 33.2 L8.8 25.8 L13.5 38 L19 36 L14.6 25.2 L25.6 25.2 Z" fill="#fff" stroke="#000" stroke-width="1.4" stroke-linejoin="round"/></svg>
<div class="ab" style="left:1547px;top:1189px;width:607px;height:73px;border:7px solid #f0882a;border-radius:16px"></div>
<div class="ab" style="left:984.7px;top:255.8px;width:28.2px;height:28.2px;border-radius:50%;background:#f0882a"></div>
</body></html>
